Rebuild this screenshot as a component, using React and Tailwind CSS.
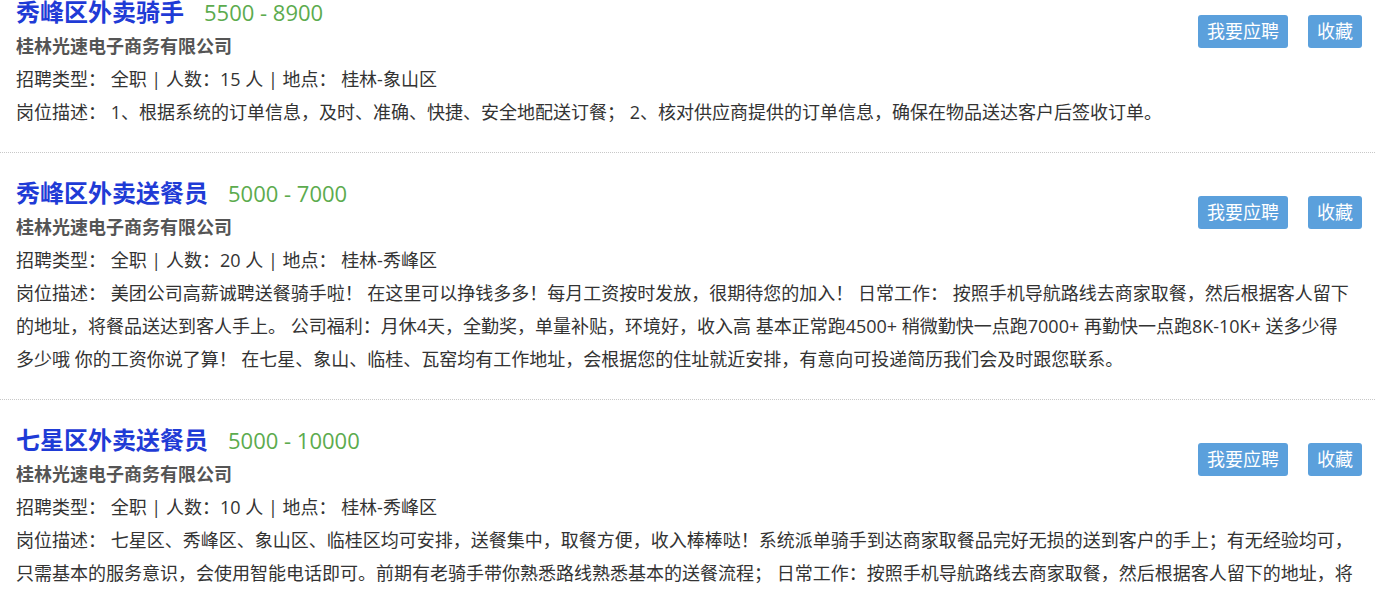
import React from 'react';

const jobs = [
  {
    title: '秀峰区外卖骑手',
    salary: '5500 - 8900',
    company: '桂林光速电子商务有限公司',
    type: '全职',
    count: '15',
    place: '桂林-象山区',
    desc: '1、根据系统的订单信息，及时、准确、快捷、安全地配送订餐； 2、核对供应商提供的订单信息，确保在物品送达客户后签收订单。',
  },
  {
    title: '秀峰区外卖送餐员',
    salary: '5000 - 7000',
    company: '桂林光速电子商务有限公司',
    type: '全职',
    count: '20',
    place: '桂林-秀峰区',
    desc: '美团公司高薪诚聘送餐骑手啦！ 在这里可以挣钱多多！每月工资按时发放，很期待您的加入！ 日常工作： 按照手机导航路线去商家取餐，然后根据客人留下的地址，将餐品送达到客人手上。 公司福利：月休4天，全勤奖，单量补贴，环境好，收入高 基本正常跑4500+ 稍微勤快一点跑7000+ 再勤快一点跑8K-10K+ 送多少得多少哦 你的工资你说了算！ 在七星、象山、临桂、瓦窑均有工作地址，会根据您的住址就近安排，有意向可投递简历我们会及时跟您联系。',
  },
  {
    title: '七星区外卖送餐员',
    salary: '5000 - 10000',
    company: '桂林光速电子商务有限公司',
    type: '全职',
    count: '10',
    place: '桂林-秀峰区',
    desc: '七星区、秀峰区、象山区、临桂区均可安排，送餐集中，取餐方便，收入棒棒哒！系统派单骑手到达商家取餐品完好无损的送到客户的手上；有无经验均可，只需基本的服务意识，会使用智能电话即可。前期有老骑手带你熟悉路线熟悉基本的送餐流程； 日常工作：按照手机导航路线去商家取餐，然后根据客人留下的地址，将餐品送达到客人手上。',
  },
];

const JobItem = ({ job }) => {
  return (
    <div className="border-b border-dotted border-[#c8c8c8] pl-[16px] pr-[13px] pt-[22px] pb-[23px]">
      {/* actions float to the right of the title rows */}
      <div className="float-right mt-[21px] flex gap-[20px]">
        <button className="h-[33px] rounded-[3px] bg-[#5ba0dc] px-[9px] text-[18px] leading-[33px] text-white">
          我要应聘
        </button>
        <button className="h-[33px] rounded-[3px] bg-[#5ba0dc] px-[9px] text-[18px] leading-[33px] text-white">
          收藏
        </button>
      </div>

      <div className="flex items-center h-[36px]">
        <span className="text-[24px] font-bold leading-[36px] text-[#1f3bd6]">{job.title}</span>
        <span className="ml-[20px] text-[22px] leading-[36px] text-[#5cab4e]">{job.salary}</span>
      </div>
      <div className="text-[18px] font-bold leading-[33px] text-[#555]">{job.company}</div>
      <div className="text-[18px] leading-[33px] text-[#333]">
        招聘类型： {job.type} | 人数：{job.count} 人 | 地点： {job.place}
      </div>
      <div className="max-w-[1338px] text-[18px] leading-[33px] text-[#333]">
        岗位描述： {job.desc}
      </div>
    </div>
  );
};

export default function App() {
  return (
    <div
      className="h-[591px] overflow-hidden bg-white"
      style={{ fontFamily: '"Open Sans", "Noto Sans CJK SC", sans-serif' }}
    >
      <div className="-mt-[28px]">
        {jobs.map((job) => (
          <JobItem key={job.title} job={job} />
        ))}
      </div>
    </div>
  );
}
